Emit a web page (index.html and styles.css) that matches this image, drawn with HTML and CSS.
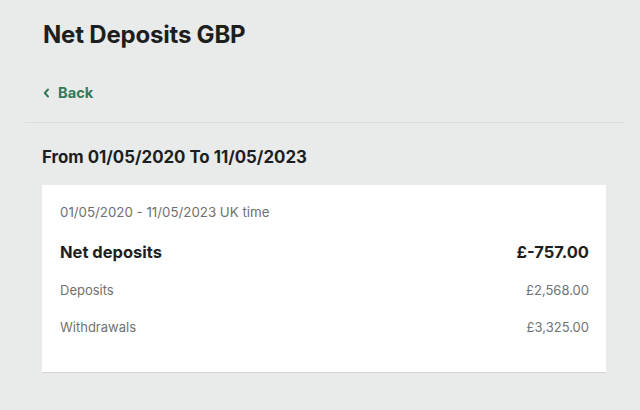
FILE: index.html
```html
<!DOCTYPE html>
<html lang="en">
<head>
<meta charset="utf-8">
<title>Net Deposits GBP</title>
<link rel="stylesheet" href="styles.css">
</head>
<body>
<div class="page">
  <header class="head">
    <h1 class="title">Net Deposits GBP</h1>
    <a class="back" href="#">
      <svg class="chev" width="7" height="10" viewBox="0 0 7 10"><path d="M5 1.5 L1.8 5 L5 8.5" fill="none" stroke="currentColor" stroke-width="2" stroke-linecap="round" stroke-linejoin="round"/></svg>
      <span>Back</span>
    </a>
  </header>
  <hr class="divider">
  <section class="period">
    <h2 class="range">From 01/05/2020 To 11/05/2023</h2>
    <div class="card">
      <div class="sub">01/05/2020 - 11/05/2023 UK time</div>
      <div class="row main"><span>Net deposits</span><span>£-757.00</span></div>
      <div class="row"><span>Deposits</span><span>£2,568.00</span></div>
      <div class="row last"><span>Withdrawals</span><span>£3,325.00</span></div>
    </div>
  </section>
</div>
</body>
</html>
```
FILE: styles.css
```css
html, body {
  margin: 0;
  padding: 0;
  background: #e9ebea;
}
body {
  font-family: Inter, "Noto Sans", "Liberation Sans", sans-serif;
  color: #1d1f1e;
  width: 640px;
  height: 410px;
  overflow: hidden;
}
.page {
  display: flex;
  flex-direction: column;
  padding: 0 16px 0 25px;
}
.head {
  display: flex;
  flex-direction: column;
  padding: 21px 0 0 18px;
}
.title {
  margin: 0;
  font-size: 24px;
  line-height: 28px;
  font-weight: 700;
  letter-spacing: -0.2px;
}
.back {
  margin-top: 35px;
  display: flex;
  align-items: center;
  gap: 8px;
  color: #337a5b;
  text-decoration: none;
  font-size: 14.6px;
  font-weight: 700;
  line-height: 18px;
}
.chev { display: block; }
.divider {
  margin: 20px 0 0 0;
  border: 0;
  height: 1px;
  background: #d9dcdb;
}
.period {
  display: flex;
  flex-direction: column;
  padding: 23px 18px 0 17px;
}
.range {
  margin: 0;
  font-size: 16.85px;
  line-height: 22px;
  font-weight: 700;
}
.card {
  margin-top: 17px;
  background: #fff;
  border-bottom: 1px solid #d4d7d6;
  padding: 18px 17px 36px 18px;
  display: flex;
  flex-direction: column;
}
.sub {
  font-size: 13.3px;
  line-height: 18px;
  color: #6e706f;
}
.row {
  display: flex;
  justify-content: space-between;
  font-size: 13px;
  line-height: 18px;
  color: #707271;
  margin-top: 18px;
}
.row.main {
  font-size: 16.5px;
  line-height: 22px;
  font-weight: 700;
  color: #1d1f1e;
  margin-top: 20px;
}
.row.main + .row { margin-top: 18px; }
.row.last { margin-top: 19px; }
```
